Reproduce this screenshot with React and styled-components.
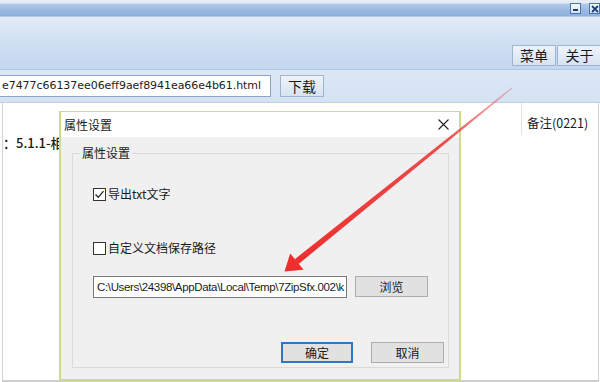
import styled, { createGlobalStyle } from "styled-components";

const GlobalStyle = createGlobalStyle`
  html, body {
    margin: 0;
    padding: 0;
    background: #ffffff;
  }
  * {
    box-sizing: border-box;
  }
`;

const Page = styled.div`
  position: relative;
  width: 600px;
  height: 382px;
  overflow: hidden;
  display: flex;
  flex-direction: column;
  font-family: "Liberation Sans", "Noto Sans CJK SC", sans-serif;
  color: #1a1a1a;
  background: #ffffff;
`;

const TitleStrip = styled.div`
  height: 17px;
  flex: none;
  display: flex;
  justify-content: flex-end;
  align-items: flex-start;
  padding-top: 3px;
  gap: 8px;
  background: linear-gradient(
    to bottom,
    #e3ebf5 0,
    #e3ebf5 3px,
    #b3cbea 4px,
    #9ab9e1 10px,
    #8eb0dc 16px,
    #d9e5f3 17px
  );
`;

const WinButton = styled.div`
  width: 11px;
  height: 11px;
  border: 1px solid #4a74b0;
  background: linear-gradient(#f4f8fd, #d4e2f4);
  display: flex;
  align-items: center;
  justify-content: center;
`;

const Toolbar = styled.div`
  height: 53px;
  flex: none;
  display: flex;
  justify-content: flex-end;
  align-items: flex-end;
  padding-bottom: 3px;
  gap: 1px;
  border-bottom: 1px solid #b3c6de;
  background: linear-gradient(to bottom, #e4ecf7 0%, #d0e0f3 45%, #c3d7ef 100%);
`;

const ToolButton = styled.button`
  width: ${(p) => p.$w}px;
  height: 21px;
  padding: 0;
  font-family: "Noto Sans CJK SC", sans-serif;
  font-size: 14px;
  line-height: 19px;
  color: #1a1a1a;
  border: 1px solid #9fb4cf;
  background: linear-gradient(to bottom, #eef3fa, #d7e3f2);
  &:last-child {
    margin-right: -2px;
  }
`;

const UrlBar = styled.div`
  height: 33px;
  flex: none;
  display: flex;
  align-items: flex-start;
  padding-top: 5px;
  gap: 9px;
  background: linear-gradient(to bottom, #dce7f5, #d4e2f3);
  border-bottom: 1px solid #c2cfdf;
`;

const UrlInput = styled.div`
  width: 274px;
  height: 22px;
  margin-left: -3px;
  padding-left: 4px;
  border: 1px solid #8ea4bf;
  background: #ffffff;
  font-family: "DejaVu Sans", sans-serif;
  font-size: 11px;
  letter-spacing: -0.05px;
  line-height: 20px;
  white-space: nowrap;
  overflow: hidden;
  color: #222;
`;

const SmallButton = styled.button`
  width: 44px;
  height: 22px;
  padding: 0;
  font-family: "Noto Sans CJK SC", sans-serif;
  font-size: 14px;
  line-height: 20px;
  color: #1a1a1a;
  border: 1px solid #9fb4cf;
  background: linear-gradient(to bottom, #eef3fa, #d7e3f2);
`;

const Content = styled.div`
  flex: 1;
  display: flex;
  border-left: 1px solid #d4d4d4;
  border-bottom: 2px solid #cfcfcf;
  margin-left: 2px;
  margin-right: 1px;
  border-right: 1px solid #d4d4d4;
`;

const MainColumn = styled.div`
  flex: 1;
  padding-top: 31px;
  overflow: hidden;
`;

const InfoLine = styled.div`
  margin-left: 0;
  font-family: "Noto Sans CJK SC", sans-serif;
  font-size: 13px;
  font-weight: 500;
  line-height: 18px;
  white-space: nowrap;
`;

const SideColumn = styled.div`
  width: 77px;
  height: 32px;
  padding: 12px 0 0 5px;
  border-left: 1px solid #e2e2e2;
  font-family: "Noto Sans CJK SC", sans-serif;
  font-size: 12.5px;
  line-height: 16px;
`;

/* floating settings window */
const Dialog = styled.div`
  position: absolute;
  left: 59px;
  top: 111px;
  width: 402px;
  height: 270px;
  display: flex;
  flex-direction: column;
  border: 2px solid #cddb92;
  border-top-width: 1px;
  background: #f0f0f0;
  font-family: "Noto Sans CJK SC", sans-serif;
  font-size: 12px;
  color: #1a1a1a;
`;

const DialogTitle = styled.div`
  height: 25px;
  flex: none;
  display: flex;
  align-items: center;
  justify-content: space-between;
  padding: 0 10px 0 3px;
  background: #ffffff;
  font-size: 12px;
`;

const DialogBody = styled.div`
  flex: 1;
  padding: 9px 10px 0 11px;
`;

const GroupBox = styled.fieldset`
  margin: 0;
  padding: 0 0 4px 20px;
  border: 1px solid #dadada;
  display: flex;
  flex-direction: column;
  align-items: flex-start;
`;

const GroupLabel = styled.legend`
  margin-left: -13px;
  padding: 0 2px;
  font-size: 12px;
  line-height: 14px;
`;

const CheckRow = styled.label`
  display: flex;
  align-items: center;
  gap: 2px;
  height: 14px;
  margin-top: ${(p) => p.$top}px;
  font-size: 12px;
  line-height: 14px;
`;

const CheckBox = styled.span`
  width: 13px;
  height: 13px;
  border: 1px solid #333333;
  background: #ffffff;
  display: flex;
  align-items: center;
  justify-content: center;
`;

const PathRow = styled.div`
  display: flex;
  align-items: flex-start;
  gap: 8px;
  margin-top: 21px;
`;

const PathInput = styled.div`
  width: 254px;
  height: 22px;
  padding-left: 3px;
  border: 1px solid #7a7a7a;
  background: #ffffff;
  font-family: "Liberation Sans", sans-serif;
  font-size: 11.5px;
  letter-spacing: -0.35px;
  line-height: 20px;
  white-space: nowrap;
  overflow: hidden;
`;

const DlgButton = styled.button`
  width: ${(p) => p.$w}px;
  height: ${(p) => p.$h}px;
  padding: 0;
  font-family: "Noto Sans CJK SC", sans-serif;
  font-size: 12px;
  line-height: 16px;
  color: #1a1a1a;
  background: #e1e1e1;
  border: 1px solid ${(p) => (p.$primary ? "#2b78c8" : "#adadad")};
  box-shadow: ${(p) => (p.$primary ? "inset 0 0 0 1px #2b78c8" : "none")};
`;

const ButtonRow = styled.div`
  align-self: stretch;
  display: flex;
  justify-content: flex-end;
  gap: 18px;
  margin-top: 44px;
  padding-right: 4px;
`;

const ArrowLayer = styled.svg`
  position: absolute;
  left: 0;
  top: 0;
  pointer-events: none;
`;

function Check() {
  return (
    <svg width="11" height="11" viewBox="0 0 11 11">
      <path d="M1.5 5.5 L4.3 8.3 L9.5 2.2" fill="none" stroke="#222" strokeWidth="1.3" />
    </svg>
  );
}

function RedArrow() {
  // tip at (285,271), shaft tapers from the upper right
  return (
    <ArrowLayer width="600" height="382" viewBox="0 0 600 382">
      <defs>
        <linearGradient id="fade" x1="512" y1="88" x2="296" y2="262" gradientUnits="userSpaceOnUse">
          <stop offset="0" stopColor="#ec3b3b" stopOpacity="0.3" />
          <stop offset="0.3" stopColor="#ec3b3b" stopOpacity="0.9" />
          <stop offset="1" stopColor="#ee2e2e" stopOpacity="1" />
        </linearGradient>
      </defs>
      <polygon points="512.4,88.5 511.6,87.5 294.8,259.2 298.6,264" fill="url(#fade)" />
      <polygon points="284.5,271.5 290.2,253.4 303.6,269.8" fill="#ee2e2e" />
    </ArrowLayer>
  );
}

export default function App() {
  return (
    <>
      <GlobalStyle />
      <Page>
        <TitleStrip>
          <WinButton>
            <svg width="7" height="7" viewBox="0 0 7 7">
              <rect x="1" y="4" width="5" height="2" fill="#1f3f78" />
            </svg>
          </WinButton>
          <WinButton>
            <svg width="8" height="8" viewBox="0 0 8 8">
              <path d="M1 1 L7 7 M7 1 L1 7" stroke="#1f3f78" strokeWidth="1.8" />
            </svg>
          </WinButton>
        </TitleStrip>
        <Toolbar>
          <ToolButton $w={44}>菜单</ToolButton>
          <ToolButton $w={45}>关于</ToolButton>
        </Toolbar>
        <UrlBar>
          <UrlInput>e7477c66137ee06eff9aef8941ea66e4b61.html</UrlInput>
          <SmallButton>下载</SmallButton>
        </UrlBar>
        <Content>
          <MainColumn>
            <InfoLine>：5.1.1-相关</InfoLine>
          </MainColumn>
          <SideColumn>备注(0221)</SideColumn>
        </Content>

        <Dialog>
          <DialogTitle>
            <span>属性设置</span>
            <svg width="11" height="11" viewBox="0 0 11 11">
              <path d="M0.5 0.5 L10.5 10.5 M10.5 0.5 L0.5 10.5" stroke="#222" strokeWidth="1.1" />
            </svg>
          </DialogTitle>
          <DialogBody>
            <GroupBox>
              <GroupLabel>属性设置</GroupLabel>
              <CheckRow $top={27}>
                <CheckBox>
                  <Check />
                </CheckBox>
                导出txt文字
              </CheckRow>
              <CheckRow $top={40}>
                <CheckBox />
                自定义文档保存路径
              </CheckRow>
              <PathRow>
                <PathInput>C:\Users\24398\AppData\Local\Temp\7ZipSfx.002\k</PathInput>
                <DlgButton $w={73} $h={21}>浏览</DlgButton>
              </PathRow>
              <ButtonRow>
                <DlgButton $w={72} $h={21} $primary>
                  确定
                </DlgButton>
                <DlgButton $w={73} $h={21}>
                  取消
                </DlgButton>
              </ButtonRow>
            </GroupBox>
          </DialogBody>
        </Dialog>

        <RedArrow />
      </Page>
    </>
  );
}
